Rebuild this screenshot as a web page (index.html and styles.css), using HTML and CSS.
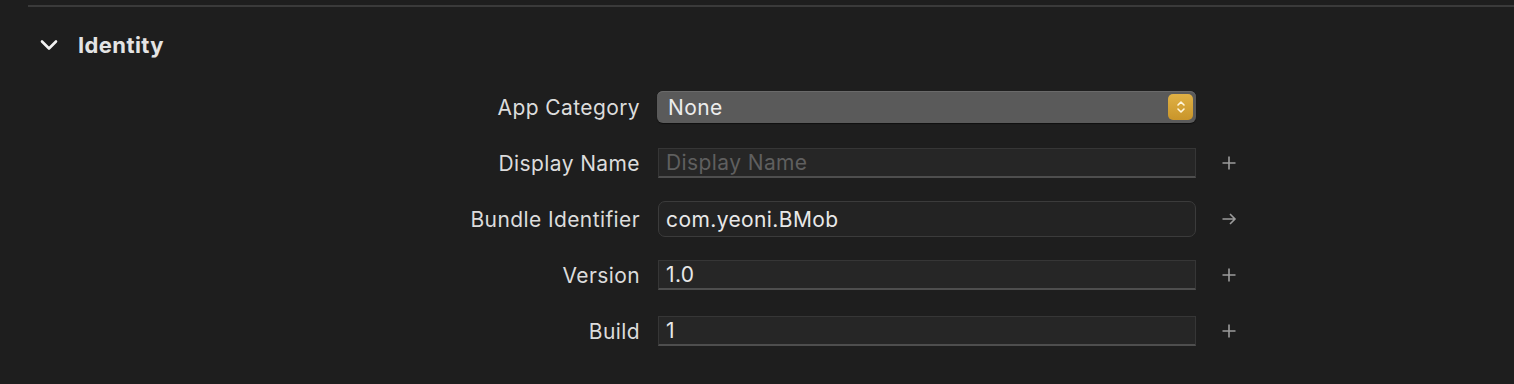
FILE: index.html
```html
<!DOCTYPE html>
<html lang="en">

<head>
    <meta charset="UTF-8">
    <title>Identity</title>
    <link rel="stylesheet" href="styles.css">
</head>

<body>
    <div class="rule"></div>
    <div class="section">
        <div class="section-head">
            <svg class="chevron" width="18" height="12" viewBox="0 0 18 12">
                <path d="M2 2.5 L9 9.5 L16 2.5" fill="none" stroke="#f2f2f2" stroke-width="2.6" stroke-linecap="round" stroke-linejoin="round"/>
            </svg>
            <h2>Identity</h2>
        </div>

        <div class="form">
            <label>App Category</label>
            <div class="popup">
                <span>None</span>
                <span class="stepper">
                    <svg width="12" height="16" viewBox="0 0 12 16">
                        <path d="M3 6 L6 3 L9 6 M3 10 L6 13 L9 10" fill="none" stroke="#fff6dc" stroke-width="1.6" stroke-linecap="round" stroke-linejoin="round"/>
                    </svg>
                </span>
            </div>
            <span></span>

            <label>Display Name</label>
            <div class="field placeholder">Display Name</div>
            <svg class="icon" width="16" height="16" viewBox="0 0 16 16">
                <path d="M8 1.5 V14.5 M1.5 8 H14.5" stroke="#9c9c9c" stroke-width="1.6"/>
            </svg>

            <label>Bundle Identifier</label>
            <div class="field rounded">com.yeoni.BMob</div>
            <svg class="icon" width="16" height="16" viewBox="0 0 16 16">
                <path d="M1.5 8 H14 M9 3 L14 8 L9 13" fill="none" stroke="#9c9c9c" stroke-width="1.6"/>
            </svg>

            <label>Version</label>
            <div class="field">1.0</div>
            <svg class="icon" width="16" height="16" viewBox="0 0 16 16">
                <path d="M8 1.5 V14.5 M1.5 8 H14.5" stroke="#9c9c9c" stroke-width="1.6"/>
            </svg>

            <label>Build</label>
            <div class="field">1</div>
            <svg class="icon" width="16" height="16" viewBox="0 0 16 16">
                <path d="M8 1.5 V14.5 M1.5 8 H14.5" stroke="#9c9c9c" stroke-width="1.6"/>
            </svg>
        </div>
    </div>
</body>

</html>
```

FILE: styles.css
```css
* {
    margin: 0;
    padding: 0;
    box-sizing: border-box;
}

body {
    background-color: #1e1e1e;
    font-family: Inter, "Noto Sans", sans-serif;
    color: #dedede;
    height: 384px;
    overflow: hidden;
}

.rule {
    margin: 5px 0 0 28px;
    height: 2px;
    background-color: #3a3a3a;
}

.section-head {
    display: flex;
    align-items: center;
    height: 72px;
    padding: 4px 0 0 40px;
}

.chevron {
    display: block;
}

.section-head h2 {
    margin-left: 20px;
    font-size: 22px;
    font-weight: 700;
    color: #e4e4e4;
    letter-spacing: 0.4px;
}

.form {
    display: grid;
    grid-template-columns: 640px 538px 66px;
    grid-auto-rows: 56px;
    column-gap: 18px;
    align-items: center;
}

.form label {
    text-align: right;
    font-size: 21px;
    letter-spacing: 0.4px;
    color: #dcdcdc;
}

.popup {
    display: flex;
    align-items: center;
    justify-content: space-between;
    height: 32px;
    margin-left: -1px;
    padding: 0 3px 0 11px;
    border-radius: 6px;
    background-color: #5a5a5a;
    box-shadow: inset 0 1px 0 #6a6a6a, 0 1px 1px rgba(0, 0, 0, 0.5);
    font-size: 21px;
    letter-spacing: 0.4px;
    color: #ececec;
}

.stepper {
    display: flex;
    align-items: center;
    justify-content: center;
    width: 25px;
    height: 26px;
    border-radius: 5px;
    background: linear-gradient(#e0b145, #c9952a);
}

.field {
    display: flex;
    align-items: center;
    height: 30px;
    padding: 0 7px;
    border: 1px solid #363636;
    border-bottom: 2px solid #4e4e4e;
    background-color: #262626;
    font-size: 21px;
    letter-spacing: 0.4px;
    color: #e8e8e8;
}

.placeholder {
    color: #5f5f5f;
}

.rounded {
    height: 36px;
    border: 1px solid #3b3b3b;
    border-radius: 7px;
    background-color: #232323;
}

.icon {
    display: block;
    margin-left: 7px;
}
```
